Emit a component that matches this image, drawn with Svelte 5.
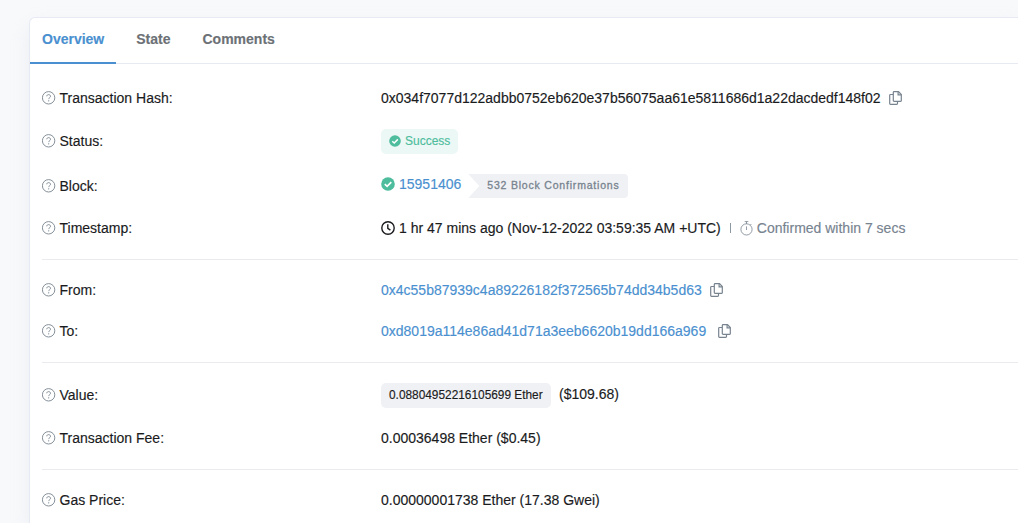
<script>
	const TABS = ['Overview', 'State', 'Comments'];

	const TX = {
		hash: '0x034f7077d122adbb0752eb620e37b56075aa61e5811686d1a22dacdedf148f02',
		status: 'Success',
		block: '15951406',
		confirmations: '532 Block Confirmations',
		time: '1 hr 47 mins ago (Nov-12-2022 03:59:35 AM +UTC)',
		confirmed: 'Confirmed within 7 secs',
		from: '0x4c55b87939c4a89226182f372565b74dd34b5d63',
		to: '0xd8019a114e86ad41d71a3eeb6620b19dd166a969',
		value: '0.08804952216105699 Ether',
		usd: '($109.68)',
		fee: '0.00036498 Ether ($0.45)',
		gas: '0.00000001738 Ether (17.38 Gwei)',
	};

	let active = $state(0);
</script>

{#snippet label(text)}
	<div class="label">
		<svg class="help" viewBox="0 0 14 14" aria-hidden="true">
			<circle cx="6.6" cy="6.8" r="6.2" />
			<path d="M4.8 5.3C4.8 4.1 5.6 3.6 6.6 3.6s1.9.6 1.9 1.7c0 1.4-1.8 1.4-1.8 2.8" />
			<circle class="dot" cx="6.7" cy="9.8" r=".65" />
		</svg>
		<span>{text}:</span>
	</div>
{/snippet}

{#snippet check()}
	<svg class="check" viewBox="0 0 14 14" aria-hidden="true">
		<circle cx="7" cy="7" r="6.8" />
		<path d="M3.8 7.2l2.3 2.2 4.2-4.3" />
	</svg>
{/snippet}

{#snippet copy()}
	<button class="copy" aria-label="Copy">
		<svg viewBox="0 0 13 14">
			<path d="M5.1.7h4.4l2.8 2.8v6.2a.7.7 0 0 1-.7.7H5.1a.8.8 0 0 1-.8-.8V1.5a.8.8 0 0 1 .8-.8z" />
			<path d="M9.1.9v3h3" />
			<path d="M4.1 3.5H1.5a.8.8 0 0 0-.8.8v8.2c0 .5.3.8.8.8h6.2c.5 0 .8-.3.8-.8v-1.9" />
		</svg>
	</button>
{/snippet}

<div class="card">
	<nav class="tabs">
		{#each TABS as tab, i}
			<button class="tab" class:active={active === i} onclick={() => active = i}>{tab}</button>
		{/each}
	</nav>

	<div class="body">
		<section>
			<div class="row">
				{@render label('Transaction Hash')}
				<div class="cell"><span class="hash">{TX.hash}</span>{@render copy()}</div>
			</div>
			<div class="row tall">
				{@render label('Status')}
				<div class="cell"><span class="status">{@render check()}{TX.status}</span></div>
			</div>
			<div class="row tall block">
				{@render label('Block')}
				<div class="cell">
					{@render check()}
					<a class="number" href="#block">{TX.block}</a>
					<span class="confirmations">{TX.confirmations}</span>
				</div>
			</div>
			<div class="row">
				{@render label('Timestamp')}
				<div class="cell">
					<svg class="clock" viewBox="0 0 14 14" aria-hidden="true">
						<circle cx="7" cy="7" r="6.2" />
						<path d="M6.8 3.3v4l2.6 1.8" />
					</svg>
					<span class="time">{TX.time}</span>
					<span class="divider"></span>
					<svg class="stopwatch" viewBox="0 0 13 15" aria-hidden="true">
						<circle cx="6.5" cy="8.4" r="5.6" />
						<path d="M4.7.6h3.6M6.5.6V3M6.5 5.4v3.6M10.3 4.1l1.1-1.1" />
					</svg>
					<span class="confirmed">{TX.confirmed}</span>
				</div>
			</div>
		</section>

		<section>
			<div class="row short">
				{@render label('From')}
				<div class="cell"><a class="from" href="#from">{TX.from}</a>{@render copy()}</div>
			</div>
			<div class="row">
				{@render label('To')}
				<div class="cell"><a class="to" href="#to">{TX.to}</a>{@render copy()}</div>
			</div>
		</section>

		<section>
			<div class="row tall">
				{@render label('Value')}
				<div class="cell"><span class="ether">{TX.value}</span><span class="usd">{TX.usd}</span></div>
			</div>
			<div class="row">
				{@render label('Transaction Fee')}
				<div class="cell"><span class="fee">{TX.fee}</span></div>
			</div>
		</section>

		<section>
			<div class="row short">
				{@render label('Gas Price')}
				<div class="cell"><span class="gas">{TX.gas}</span></div>
			</div>
		</section>
	</div>
</div>

<style>
	:global(body) {
		background: #f8f9fb;
	}

	.card {
		box-sizing: border-box;
		height: 506px;
		margin: 17px 0 0 29px;
		background: #fff;
		border: 1px solid #e7eaf3;
		border-width: 1px 0 0 1px;
		border-radius: 6px 0 0 0;
		box-shadow: 0 8px 19px rgba(189, 197, 209, 0.2);
		font-family: 'Liberation Sans', Arial, sans-serif;
		font-size: 14px;
		line-height: 20px;
		color: #1a1b1d;
		white-space: nowrap;
		-webkit-text-stroke: 0.15px currentColor;
	}

	.tabs {
		display: flex;
		gap: 8px;
		height: 45px;
		border-bottom: 1px solid #e7eaf3;
	}

	.tab {
		box-sizing: border-box;
		height: 46px;
		padding: 0 12px 3px;
		border: 0;
		border-bottom: 2px solid transparent;
		background: none;
		font: bold 14px/20px 'Liberation Sans', Arial, sans-serif;
		color: #6c7176;
		cursor: pointer;
	}

	.tab.active {
		color: #4a90d0;
		border-color: #4a90d0;
	}

	.body {
		padding: 13px 0 0 12px;
	}

	section + section {
		margin-top: 10px;
		padding-top: 10px;
		border-top: 1px solid #e9ebef;
	}

	.row {
		display: flex;
		align-items: center;
		height: 42px;
	}

	.row.tall { height: 44px; }
	.row.short { height: 40px; }

	.label {
		display: flex;
		align-items: center;
		gap: 3.5px;
		width: 339px;
	}

	.block .label { padding-top: 2px; }

	.cell {
		display: flex;
		align-items: center;
	}

	svg {
		display: block;
		fill: none;
		stroke: currentColor;
		flex: none;
	}

	.help {
		width: 14px;
		height: 14px;
		color: #77838f;
		stroke-width: 0.9;
	}

	.help .dot {
		fill: currentColor;
		stroke: none;
	}

	.check {
		width: 14px;
		height: 14px;
	}

	.check circle {
		fill: #4dbd9d;
		stroke: none;
	}

	.check path {
		stroke: #fff;
		stroke-width: 1.7;
	}

	.copy {
		margin: 0 0 0 8px;
		padding: 0;
		border: 0;
		background: none;
		color: #77838f;
		cursor: pointer;
	}

	.copy svg {
		width: 13px;
		height: 14px;
		stroke-width: 1.2;
	}

	.to + .copy { margin-left: 12px; }

	.status {
		display: flex;
		align-items: center;
		box-sizing: border-box;
		gap: 4px;
		width: 77px;
		height: 25px;
		padding: 0 8px;
		border-radius: 5px;
		background: #ecf8f5;
		color: #4dbd9d;
		font-size: 12px;
	}

	.status .check {
		width: 12px;
		height: 12px;
	}

	a {
		color: #4a90d0;
		text-decoration: none;
	}

	.number { margin-left: 4px; }

	.block .check,
	.number {
		margin-bottom: 2px;
	}

	.confirmations {
		box-sizing: border-box;
		width: 160px;
		height: 24px;
		margin: 2px 0 0 7px;
		padding-left: 19px;
		border-radius: 0 4px 4px 0;
		background: #f0f1f4;
		clip-path: polygon(0 0, 100% 0, 100% 100%, 0 100%, 11px 50%);
		color: #77838f;
		font-size: 10.5px;
		line-height: 23px;
		letter-spacing: 0.8px;
		-webkit-text-stroke: 0.3px currentColor;
	}

	.clock {
		width: 14px;
		height: 14px;
		margin-right: 4px;
		stroke-width: 1.4;
	}

	.divider {
		width: 1px;
		height: 10px;
		margin: 0 9px;
		background: #8c98a4;
	}

	.stopwatch {
		width: 13px;
		height: 15px;
		margin-right: 4px;
		color: #77838f;
		stroke-width: 0.8;
	}

	.confirmed { color: #77838f; }

	.ether {
		box-sizing: border-box;
		width: 170px;
		height: 25px;
		padding-left: 8px;
		border-radius: 5px;
		background: #f0f1f4;
		font-size: 11.87px;
		line-height: 24px;
	}

	.usd { margin: 0 0 2px 8px; }
</style>
